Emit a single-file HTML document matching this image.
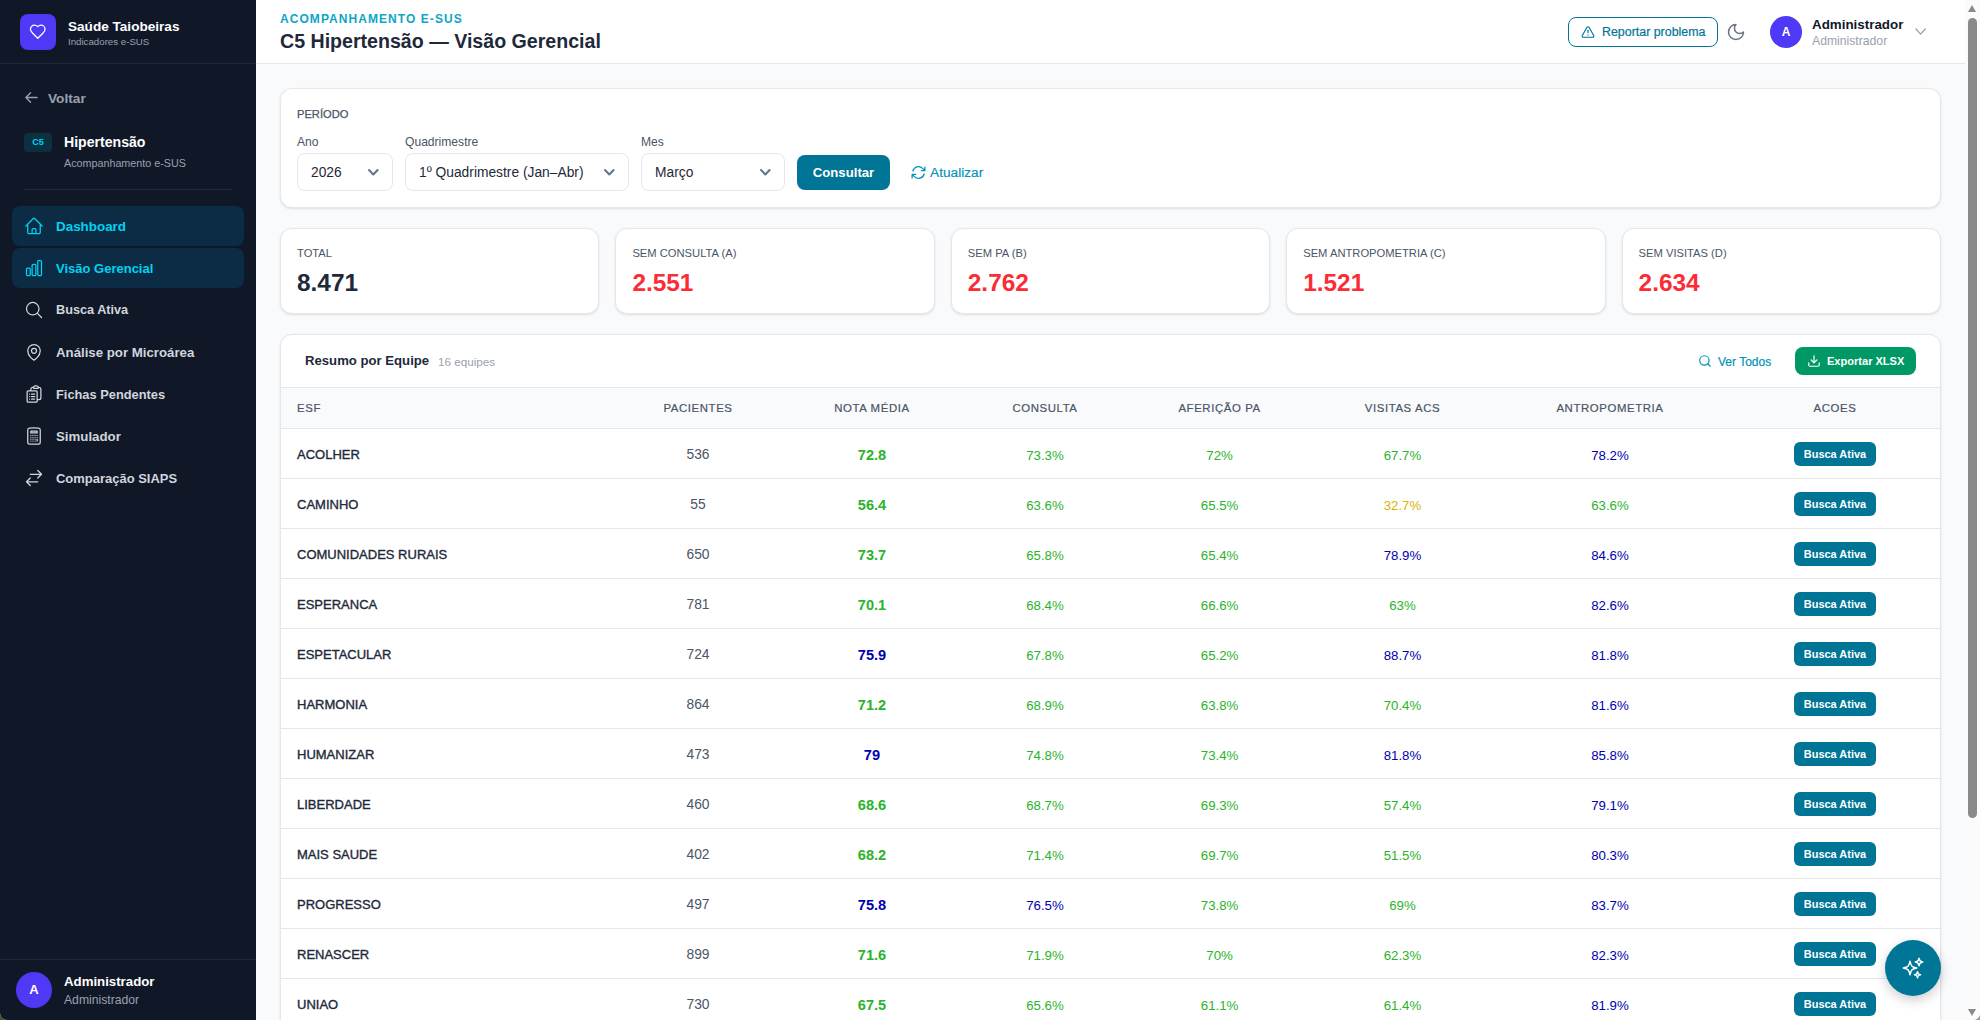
<!DOCTYPE html>
<html lang="pt-BR">
<head>
<meta charset="utf-8">
<title>C5 Hipertensão — Visão Gerencial</title>
<style>
*{box-sizing:border-box;margin:0;padding:0}
html,body{width:1980px;height:1020px;overflow:hidden}
html{background:linear-gradient(90deg,#46551f 0,#46551f 50%,#9a9a9a 50%,#9a9a9a 100%)}
body{font-family:"Liberation Sans",sans-serif;background:#f9fafb;color:#101828;position:relative;border-radius:0 0 7px 7px;overflow:hidden}
svg{display:block}
#sb{position:absolute;left:0;top:0;width:256px;height:1020px;background:#101828}
#sb .logo{position:absolute;left:20px;top:14px;width:36px;height:36px;border-radius:8px;background:#4f39f6}
#sb .brand{position:absolute;left:68px;top:19px;color:#fff;font-weight:700;font-size:13.58px;white-space:nowrap}
#sb .brand-sub{position:absolute;left:68px;top:36px;color:#99a1af;font-size:9.7px;white-space:nowrap}
#sb .hr1{position:absolute;left:0;top:63px;width:256px;height:1px;background:#1e2939}
#sb .back{font-weight:700;position:absolute;left:25px;top:90px;width:100px;height:20px;color:#99a1af;font-size:13.7px;white-space:nowrap}
#sb .back span{position:absolute;left:23px;top:1px}
#sb .c5{position:absolute;left:24px;top:133px;width:28px;height:19px;border-radius:4px;background:#0b3042;color:#00d3f2;font-size:9px;font-weight:700;text-align:center;line-height:19px}
#sb .mod{position:absolute;left:64px;top:134px;color:#fff;font-weight:700;font-size:14.1px;white-space:nowrap}
#sb .mod-sub{position:absolute;left:64px;top:157px;color:#99a1af;font-size:10.76px;white-space:nowrap}
#sb .hr2{position:absolute;left:24px;top:189px;width:208px;height:1px;background:#1e2939}
.nav{position:absolute;left:12px;width:232px;height:40px;border-radius:8px;color:#d1d5dc;font-size:14px;font-weight:700}
.nav.act{background:#0c2b45;color:#00d3f2}
.nav span{position:absolute;left:44px;top:13px;white-space:nowrap}
#sb .hr3{position:absolute;left:0;top:959px;width:256px;height:1px;background:#1e2939}
#sb .av{position:absolute;left:16px;top:972px;width:36px;height:36px;border-radius:50%;background:#4f39f6;color:#fff;font-weight:700;font-size:13px;text-align:center;line-height:36px}
#sb .uname{position:absolute;left:64px;top:974px;color:#fff;font-weight:700;font-size:13.24px}
#sb .urole{position:absolute;left:64px;top:993px;color:#99a1af;font-size:12.18px}
#hd{position:absolute;left:256px;top:0;width:1709px;height:64px;background:#fff;border-bottom:1px solid #e5e7eb}
#hd .kick{position:absolute;left:24px;top:12px;color:#0ea5c6;font-size:12px;font-weight:700;letter-spacing:1.06px;white-space:nowrap}
#hd .title{position:absolute;left:24px;top:30px;color:#1e2939;font-size:19.6px;font-weight:700;white-space:nowrap}
.rep{position:absolute;left:1568px;top:17px;width:150px;height:30px;border:1px solid #007595;border-radius:8px;color:#007595;font-size:12.42px;-webkit-text-stroke:0.2px #007595}
.rep span{position:absolute;left:33px;top:7px;white-space:nowrap}
.hav{position:absolute;left:1770px;top:16px;width:32px;height:32px;border-radius:50%;background:#4f39f6;color:#fff;font-weight:700;font-size:12px;text-align:center;line-height:32px}
.hname{position:absolute;left:1812px;top:17px;color:#101828;font-size:13.39px;font-weight:700;white-space:nowrap}
.hrole{position:absolute;left:1812px;top:34px;color:#99a1af;font-size:12.2px;white-space:nowrap}
.card{position:absolute;background:#fff;border:1px solid #e5e7eb;border-radius:12px;box-shadow:0 1px 3px rgba(0,0,0,.08),0 1px 2px rgba(0,0,0,.04)}
#filt{left:280px;top:88px;width:1661px;height:120px}
#filt .per{position:absolute;left:16px;top:19px;color:#4a5565;font-size:11.15px;-webkit-text-stroke:0.25px #4a5565;white-space:nowrap}
#filt .lab{position:absolute;top:46px;color:#4a5565;font-size:12.1px;white-space:nowrap}
#filt .sel{position:absolute;top:64px;height:38px;border:1px solid #e5e7eb;border-radius:8px;color:#1e2939;font-size:13.8px}
#filt .sel span{position:absolute;left:13px;top:11px;white-space:nowrap}
#filt .btn{position:absolute;left:516px;top:66px;width:93px;height:35px;border-radius:8px;background:#007595;color:#fff;font-size:13.17px;font-weight:700;text-align:center;line-height:35px}
#filt .atu{position:absolute;left:649px;top:76px;color:#0092b8;font-size:13.69px;-webkit-text-stroke:0.15px #0092b8;white-space:nowrap}
.stat{position:absolute;top:228px;width:319.4px;height:86px;background:#fff;border:1px solid #e5e7eb;border-radius:12px;box-shadow:0 1px 3px rgba(0,0,0,.08),0 1px 2px rgba(0,0,0,.04)}
.stat .sl{position:absolute;left:16px;top:18px;color:#4a5565;font-size:11.2px;white-space:nowrap}
.stat .sv{position:absolute;left:16px;top:40px;color:#1e2939;font-size:24.4px;font-weight:700;white-space:nowrap}
.stat .sv.red{color:#fb2c36}
#tbl{left:280px;top:334px;width:1661px;height:720px;overflow:hidden}
#tbl .th1{position:absolute;left:0;top:0;width:100%;height:53px;border-bottom:1px solid #e5e7eb}
#tbl .tt{position:absolute;left:24px;top:18px;color:#1e2939;font-size:13.15px;font-weight:700;white-space:nowrap}
#tbl .tc{position:absolute;left:157px;top:20px;color:#99a1af;font-size:11.7px;white-space:nowrap}
#tbl .vt{position:absolute;left:1437px;top:20px;color:#0092b8;font-size:12px;-webkit-text-stroke:0.2px #0092b8;white-space:nowrap}
#tbl .xl{position:absolute;left:1514px;top:12px;width:121px;height:28px;border-radius:8px;background:#009966;color:#fff;font-size:11.06px;font-weight:700;padding:8px 0 0 32px;white-space:nowrap}
#tbl table{position:absolute;left:0;top:53px;border-collapse:collapse;table-layout:fixed;width:1659px}
#tbl th{height:40px;background:#f9fafb;color:#4a5565;-webkit-text-stroke:0.2px #4a5565;font-size:11.4px;font-weight:400;letter-spacing:.6px;text-align:center;border-bottom:1px solid #e5e7eb;padding:0}
#tbl td{height:50px;text-align:center;border-bottom:1px solid #e5e7eb;font-size:14px;padding:2px 0 0 0}
#tbl .l{text-align:left;padding-left:16px}
#tbl td.name{color:#1e2939;font-size:13px;-webkit-text-stroke:0.35px #1e2939}
#tbl td.pac{color:#4a5565;font-size:13.8px}
#tbl td.nota{font-weight:700;font-size:14.6px;padding-top:4px}
#tbl td.pct{font-size:13.25px;padding-top:4px}
#tbl .g{color:#2bb32b}
#tbl .b{color:#0000b0}
#tbl .y{color:#d9b400}
#tbl .ba{display:inline-block;width:82px;height:24px;line-height:24px;border-radius:6px;background:#007595;color:#fff;font-size:10.97px;font-weight:700}
.fab{position:absolute;left:1885px;top:940px;width:56px;height:56px;border-radius:50%;background:#007595;box-shadow:0 4px 12px rgba(0,0,0,.2)}
#scr{position:absolute;left:1965px;top:0;width:15px;height:1020px;background:#fbfbfb}
#scr .thumb{position:absolute;left:3px;top:18px;width:9px;height:800px;border-radius:5px;background:#8a8a8a}
#scr .up{position:absolute;left:3px;top:5px;width:0;height:0;border-left:4.5px solid transparent;border-right:4.5px solid transparent;border-bottom:7px solid #8a8a8a}
#scr .dn{position:absolute;left:3px;top:1009px;width:0;height:0;border-left:4.5px solid transparent;border-right:4.5px solid transparent;border-top:7px solid #8a8a8a}

.up,.dn{}

</style>
</head>
<body>
<div id="sb">
  <div class="logo"><svg width="17.5" height="17.5" viewBox="0 0 24 24" fill="none" stroke="#fff" stroke-width="1.8" stroke-linecap="round" stroke-linejoin="round" style="position:absolute;left:9.1px;top:8.9px"><path d="M19 14c1.49-1.46 3-3.21 3-5.5A5.5 5.5 0 0 0 16.5 3c-1.76 0-3 .5-4.5 2-1.5-1.5-2.74-2-4.5-2A5.5 5.5 0 0 0 2 8.5c0 2.3 1.5 4.05 3 5.5l7 7Z"/></svg></div>
  <div class="brand">Saúde Taiobeiras</div>
  <div class="brand-sub">Indicadores e-SUS</div>
  <div class="hr1"></div>
  <div class="back"><svg width="15" height="15" viewBox="0 0 24 24" fill="none" stroke="#99a1af" stroke-width="2.1" stroke-linecap="round" stroke-linejoin="round" style="position:absolute;left:-0.95px;top:0.3px"><path d="M10.5 19.5L3 12m0 0l7.5-7.5M3 12h18"/></svg><span>Voltar</span></div>
  <div class="c5">C5</div>
  <div class="mod">Hipertensão</div>
  <div class="mod-sub">Acompanhamento e-SUS</div>
  <div class="hr2"></div>
<div class="nav act" style="top:206px"><svg width="20" height="20" viewBox="0 0 24 24" fill="none" stroke="#00d3f2" stroke-width="1.5" stroke-linecap="round" stroke-linejoin="round" style="position:absolute;left:12px;top:10px"><path d="M2.25 12l8.954-8.955c.44-.439 1.152-.439 1.591 0L21.75 12M4.5 9.75v10.125c0 .621.504 1.125 1.125 1.125H9.75v-4.875c0-.621.504-1.125 1.125-1.125h2.25c.621 0 1.125.504 1.125 1.125V21h4.125c.621 0 1.125-.504 1.125-1.125V9.75M8.25 21h8.25"/></svg><span style="font-size:13.41px">Dashboard</span></div>
<div class="nav act" style="top:248px"><svg width="20" height="20" viewBox="0 0 24 24" fill="none" stroke="#00d3f2" stroke-width="1.5" stroke-linecap="round" stroke-linejoin="round" style="position:absolute;left:12px;top:10px"><path d="M3 13.125C3 12.504 3.504 12 4.125 12h2.25c.621 0 1.125.504 1.125 1.125v6.75C7.5 20.496 6.996 21 6.375 21h-2.25A1.125 1.125 0 013 19.875v-6.75zM9.75 8.625c0-.621.504-1.125 1.125-1.125h2.25c.621 0 1.125.504 1.125 1.125v11.25c0 .621-.504 1.125-1.125 1.125h-2.25a1.125 1.125 0 01-1.125-1.125V8.625zM16.5 4.125c0-.621.504-1.125 1.125-1.125h2.25C20.496 3 21 3.504 21 4.125v15.75c0 .621-.504 1.125-1.125 1.125h-2.25a1.125 1.125 0 01-1.125-1.125V4.125z"/></svg><span style="font-size:13.0px">Visão Gerencial</span></div>
<div class="nav" style="top:290px"><svg width="20" height="20" viewBox="0 0 24 24" fill="none" stroke="#d1d5dc" stroke-width="1.5" stroke-linecap="round" stroke-linejoin="round" style="position:absolute;left:12px;top:10px"><path d="M21 21l-5.197-5.197m0 0A7.5 7.5 0 105.196 5.196a7.5 7.5 0 0010.607 10.607z"/></svg><span style="font-size:12.7px">Busca Ativa</span></div>
<div class="nav" style="top:332px"><svg width="20" height="20" viewBox="0 0 24 24" fill="none" stroke="#d1d5dc" stroke-width="1.5" stroke-linecap="round" stroke-linejoin="round" style="position:absolute;left:12px;top:10px"><path d="M15 10.5a3 3 0 11-6 0 3 3 0 016 0z"/><path d="M19.5 10.5c0 7.142-7.5 11.25-7.5 11.25S4.5 17.642 4.5 10.5a7.5 7.5 0 1115 0z"/></svg><span style="font-size:13.24px">Análise por Microárea</span></div>
<div class="nav" style="top:374px"><svg width="20" height="20" viewBox="0 0 24 24" fill="none" stroke="#d1d5dc" stroke-width="1.5" stroke-linecap="round" stroke-linejoin="round" style="position:absolute;left:12px;top:10px"><path d="M9 12h3.75M9 15h3.75M9 18h3.75m3 .75H18a2.25 2.25 0 002.25-2.25V6.108c0-1.135-.845-2.098-1.976-2.192a48.424 48.424 0 00-1.123-.08m-5.801 0c-.065.21-.1.433-.1.664 0 .414.336.75.75.75h4.5a.75.75 0 00.75-.75 2.25 2.25 0 00-.1-.664m-5.8 0A2.251 2.251 0 0113.5 2.25H15c1.012 0 1.867.668 2.15 1.586m-5.8 0c-.376.023-.75.05-1.124.08C9.095 4.01 8.25 4.973 8.25 6.108V8.25m0 0H4.875c-.621 0-1.125.504-1.125 1.125v11.25c0 .621.504 1.125 1.125 1.125h9.75c.621 0 1.125-.504 1.125-1.125V9.375c0-.621-.504-1.125-1.125-1.125H8.25zM6.75 12h.008v.008H6.75V12zm0 3h.008v.008H6.75V15zm0 3h.008v.008H6.75V18z"/></svg><span style="font-size:12.83px">Fichas Pendentes</span></div>
<div class="nav" style="top:416px"><svg width="20" height="20" viewBox="0 0 24 24" fill="none" stroke="#d1d5dc" stroke-width="1.5" stroke-linecap="round" stroke-linejoin="round" style="position:absolute;left:12px;top:10px"><path d="M15.75 15.75V18m-7.5-6.75h.008v.008H8.25v-.008zm0 2.25h.008v.008H8.25V13.5zm0 2.25h.008v.008H8.25v-.008zm0 2.25h.008v.008H8.25V18zm2.498-6.75h.007v.008h-.007v-.008zm0 2.25h.007v.008h-.007V13.5zm0 2.25h.007v.008h-.007v-.008zm0 2.25h.007v.008h-.007V18zm2.504-6.75h.008v.008h-.008v-.008zm0 2.25h.008v.008h-.008V13.5zm0 2.25h.008v.008h-.008v-.008zm0 2.25h.008v.008h-.008V18zm2.498-6.75h.008v.008h-.008v-.008zm0 2.25h.008v.008h-.008V13.5zM8.25 6h7.5v2.25h-7.5V6zM12 2.25c-1.892 0-3.758.11-5.593.322C5.307 2.7 4.5 3.65 4.5 4.757V19.5a2.25 2.25 0 002.25 2.25h10.5a2.25 2.25 0 002.25-2.25V4.757c0-1.108-.806-2.057-1.907-2.185A48.507 48.507 0 0012 2.25z"/></svg><span style="font-size:13.27px">Simulador</span></div>
<div class="nav" style="top:458px"><svg width="20" height="20" viewBox="0 0 24 24" fill="none" stroke="#d1d5dc" stroke-width="1.5" stroke-linecap="round" stroke-linejoin="round" style="position:absolute;left:12px;top:10px"><path d="M7.5 21L3 16.5m0 0L7.5 12M3 16.5h13.5m0-13.5L21 7.5m0 0L16.5 12M21 7.5H7.5"/></svg><span style="font-size:12.97px">Comparação SIAPS</span></div>

  <div class="hr3"></div>
  <div class="av">A</div>
  <div class="uname">Administrador</div>
  <div class="urole">Administrador</div>
</div>
<div id="hd">
  <div class="kick">ACOMPANHAMENTO E-SUS</div>
  <div class="title">C5 Hipertensão — Visão Gerencial</div>
</div>
<div class="rep"><span>Reportar problema</span></div>
<svg width="14" height="14" viewBox="0 0 24 24" fill="none" stroke="#007595" stroke-width="2" stroke-linecap="round" stroke-linejoin="round" style="position:absolute;left:1581.2px;top:24.6px"><path d="m21.73 18-8-14a2 2 0 0 0-3.48 0l-8 14A2 2 0 0 0 4 21h16a2 2 0 0 0 1.73-3"/><path d="M12 9v4"/><path d="M12 17h.01"/></svg>
<svg width="20" height="20" viewBox="0 0 24 24" fill="none" stroke="#6a7282" stroke-width="1.8" stroke-linecap="round" stroke-linejoin="round" style="position:absolute;left:1726.3px;top:21.5px"><path d="M12 3a6 6 0 0 0 9 9 9 9 0 1 1-9-9Z"/></svg>
<div class="hav">A</div>
<div class="hname">Administrador</div>
<div class="hrole">Administrador</div>
<svg width="15" height="11" style="position:absolute;left:1913.40px;top:26.40px;z-index:5" fill="none" stroke="#99a1af" stroke-width="1.3" stroke-linecap="round" stroke-linejoin="round"><polyline points="3.00,3.00 7.60,8.10 12.30,3.00"/></svg>
<div id="filt" class="card">
  <div class="per">PERÍODO</div>
  <div class="lab" style="left:16px">Ano</div>
  <div class="lab" style="left:124px">Quadrimestre</div>
  <div class="lab" style="left:360px">Mes</div>
  <div class="sel" style="left:16px;width:96px"><span>2026</span></div>
  <div class="sel" style="left:124px;width:224px"><span>1º Quadrimestre (Jan–Abr)</span></div>
  <div class="sel" style="left:360px;width:144px"><span>Março</span></div>
  <div class="btn">Consultar</div>
  <div class="atu">Atualizar</div>
</div>
<svg width="15" height="10" style="position:absolute;left:366.30px;top:167.10px;z-index:5" fill="none" stroke="#62748e" stroke-width="2" stroke-linecap="round" stroke-linejoin="round"><polyline points="3.00,3.00 7.30,7.50 11.60,3.00"/></svg>
<svg width="15" height="10" style="position:absolute;left:601.80px;top:167.10px;z-index:5" fill="none" stroke="#62748e" stroke-width="2" stroke-linecap="round" stroke-linejoin="round"><polyline points="3.00,3.00 7.30,7.50 11.60,3.00"/></svg>
<svg width="15" height="10" style="position:absolute;left:757.80px;top:167.10px;z-index:5" fill="none" stroke="#62748e" stroke-width="2" stroke-linecap="round" stroke-linejoin="round"><polyline points="3.00,3.00 7.30,7.50 11.60,3.00"/></svg>
<svg width="17" height="17" viewBox="0 0 24 24" fill="none" stroke="#0092b8" stroke-width="1.8" stroke-linecap="round" stroke-linejoin="round" style="position:absolute;left:909.5px;top:164.2px"><path d="M16.023 9.348h4.992v-.001M2.985 19.644v-4.992m0 0h4.992m-4.993 0l3.181 3.183a8.25 8.25 0 0013.803-3.7M4.031 9.865a8.25 8.25 0 0113.803-3.7l3.181 3.182m0-4.991v4.99"/></svg>
<div class="stat" style="left:280.0px"><div class="sl">TOTAL</div><div class="sv">8.471</div></div>
<div class="stat" style="left:615.4px"><div class="sl">SEM CONSULTA (A)</div><div class="sv red">2.551</div></div>
<div class="stat" style="left:950.8px"><div class="sl">SEM PA (B)</div><div class="sv red">2.762</div></div>
<div class="stat" style="left:1286.2px"><div class="sl">SEM ANTROPOMETRIA (C)</div><div class="sv red">1.521</div></div>
<div class="stat" style="left:1621.6px"><div class="sl">SEM VISITAS (D)</div><div class="sv red">2.634</div></div>

<div id="tbl" class="card">
  <div class="th1"><span class="tt">Resumo por Equipe</span><span class="tc">16 equipes</span>
  <div class="vt">Ver Todos</div>
  <div class="xl">Exportar XLSX</div>
  </div>
  <table><colgroup><col style="width:336.8px"><col style="width:160.4px"><col style="width:187.6px"><col style="width:158.4px"><col style="width:190.8px"><col style="width:175.0px"><col style="width:240.0px"><col style="width:210.0px"></colgroup><thead><tr><th class=l>ESF</th><th>PACIENTES</th><th>NOTA MÉDIA</th><th>CONSULTA</th><th>AFERIÇÃO PA</th><th>VISITAS ACS</th><th>ANTROPOMETRIA</th><th>ACOES</th></tr></thead><tbody>
<tr><td class="l name">ACOLHER</td><td class="pac">536</td><td class="nota g">72.8</td><td class="pct g">73.3%</td><td class="pct g">72%</td><td class="pct g">67.7%</td><td class="pct b">78.2%</td><td><span class="ba">Busca Ativa</span></td></tr>
<tr><td class="l name">CAMINHO</td><td class="pac">55</td><td class="nota g">56.4</td><td class="pct g">63.6%</td><td class="pct g">65.5%</td><td class="pct y">32.7%</td><td class="pct g">63.6%</td><td><span class="ba">Busca Ativa</span></td></tr>
<tr><td class="l name">COMUNIDADES RURAIS</td><td class="pac">650</td><td class="nota g">73.7</td><td class="pct g">65.8%</td><td class="pct g">65.4%</td><td class="pct b">78.9%</td><td class="pct b">84.6%</td><td><span class="ba">Busca Ativa</span></td></tr>
<tr><td class="l name">ESPERANCA</td><td class="pac">781</td><td class="nota g">70.1</td><td class="pct g">68.4%</td><td class="pct g">66.6%</td><td class="pct g">63%</td><td class="pct b">82.6%</td><td><span class="ba">Busca Ativa</span></td></tr>
<tr><td class="l name">ESPETACULAR</td><td class="pac">724</td><td class="nota b">75.9</td><td class="pct g">67.8%</td><td class="pct g">65.2%</td><td class="pct b">88.7%</td><td class="pct b">81.8%</td><td><span class="ba">Busca Ativa</span></td></tr>
<tr><td class="l name">HARMONIA</td><td class="pac">864</td><td class="nota g">71.2</td><td class="pct g">68.9%</td><td class="pct g">63.8%</td><td class="pct g">70.4%</td><td class="pct b">81.6%</td><td><span class="ba">Busca Ativa</span></td></tr>
<tr><td class="l name">HUMANIZAR</td><td class="pac">473</td><td class="nota b">79</td><td class="pct g">74.8%</td><td class="pct g">73.4%</td><td class="pct b">81.8%</td><td class="pct b">85.8%</td><td><span class="ba">Busca Ativa</span></td></tr>
<tr><td class="l name">LIBERDADE</td><td class="pac">460</td><td class="nota g">68.6</td><td class="pct g">68.7%</td><td class="pct g">69.3%</td><td class="pct g">57.4%</td><td class="pct b">79.1%</td><td><span class="ba">Busca Ativa</span></td></tr>
<tr><td class="l name">MAIS SAUDE</td><td class="pac">402</td><td class="nota g">68.2</td><td class="pct g">71.4%</td><td class="pct g">69.7%</td><td class="pct g">51.5%</td><td class="pct b">80.3%</td><td><span class="ba">Busca Ativa</span></td></tr>
<tr><td class="l name">PROGRESSO</td><td class="pac">497</td><td class="nota b">75.8</td><td class="pct b">76.5%</td><td class="pct g">73.8%</td><td class="pct g">69%</td><td class="pct b">83.7%</td><td><span class="ba">Busca Ativa</span></td></tr>
<tr><td class="l name">RENASCER</td><td class="pac">899</td><td class="nota g">71.6</td><td class="pct g">71.9%</td><td class="pct g">70%</td><td class="pct g">62.3%</td><td class="pct b">82.3%</td><td><span class="ba">Busca Ativa</span></td></tr>
<tr><td class="l name">UNIAO</td><td class="pac">730</td><td class="nota g">67.5</td><td class="pct g">65.6%</td><td class="pct g">61.1%</td><td class="pct g">61.4%</td><td class="pct b">81.9%</td><td><span class="ba">Busca Ativa</span></td></tr>
</tbody></table>
</div>
<svg width="14" height="14" viewBox="0 0 24 24" fill="none" stroke="#0092b8" stroke-width="2" stroke-linecap="round" stroke-linejoin="round" style="position:absolute;left:1697.8px;top:353.7px"><circle cx="11" cy="11" r="8"/><path d="m21 21-4.3-4.3"/></svg>
<svg width="14" height="14" viewBox="0 0 24 24" fill="none" stroke="#fff" stroke-width="2" stroke-linecap="round" stroke-linejoin="round" style="position:absolute;left:1806.7px;top:353.8px"><path d="M21 15v4a2 2 0 0 1-2 2H5a2 2 0 0 1-2-2v-4"/><polyline points="7 10 12 15 17 10"/><line x1="12" x2="12" y1="15" y2="3"/></svg>
<div class="fab"><svg width="24" height="24" viewBox="0 0 24 24" fill="none" stroke="#fff" stroke-width="1.5" stroke-linecap="round" stroke-linejoin="round" style="position:absolute;left:16px;top:16px"><path d="M9.813 15.904L9 18.75l-.813-2.846a4.5 4.5 0 00-3.09-3.09L2.25 12l2.846-.813a4.5 4.5 0 003.09-3.09L9 5.25l.813 2.846a4.5 4.5 0 003.09 3.09L15.75 12l-2.846.813a4.5 4.5 0 00-3.09 3.09zM18.259 8.715L18 9.75l-.259-1.035a3.375 3.375 0 00-2.455-2.456L14.25 6l1.036-.259a3.375 3.375 0 002.455-2.456L18 2.25l.259 1.035a3.375 3.375 0 002.456 2.456L21.75 6l-1.035.259a3.375 3.375 0 00-2.456 2.456zM16.894 20.567L16.5 21.75l-.394-1.183a2.25 2.25 0 00-1.423-1.423L13.5 18.75l1.183-.394a2.25 2.25 0 001.423-1.423l.394-1.183.394 1.183a2.25 2.25 0 001.423 1.423l1.183.394-1.183.394a2.25 2.25 0 00-1.423 1.423z"/></svg></div>
<div id="scr"><div class="up"></div><div class="thumb"></div><div class="dn"></div></div>
</body>
</html>
